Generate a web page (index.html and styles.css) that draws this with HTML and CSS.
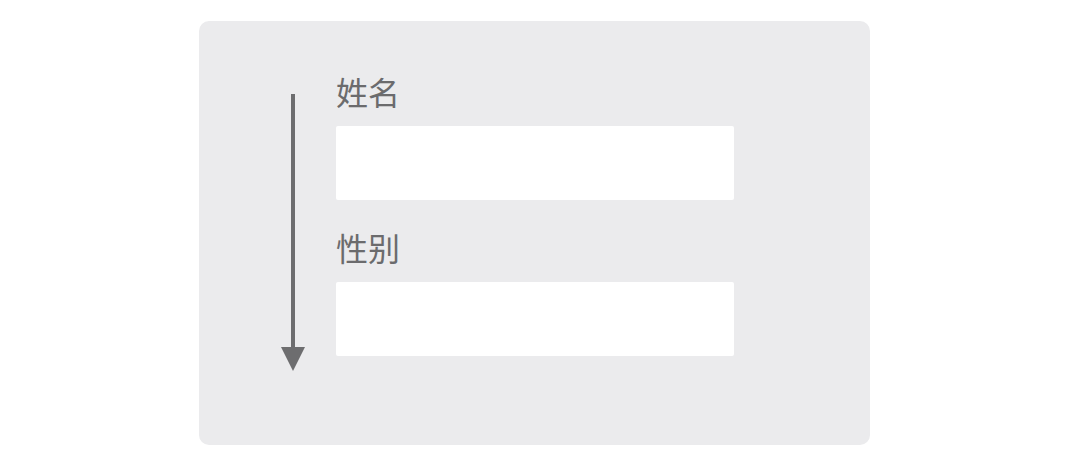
FILE: index.html
```html
<!DOCTYPE html>
<html lang="zh">
<head>
<meta charset="utf-8">
<link rel="stylesheet" href="styles.css">
</head>
<body>
<div class="card">
  <svg class="arrow" width="24" height="277" viewBox="0 0 24 277">
    <rect x="10" y="0" width="4" height="256" fill="#6d6d6f"/>
    <polygon points="0,253 24,253 12,277" fill="#6d6d6f"/>
  </svg>
  <div class="form">
    <div class="label">姓名</div>
    <div class="input"></div>
    <div class="label second">性别</div>
    <div class="input"></div>
  </div>
</div>
</body>
</html>
```
FILE: styles.css
```css
html, body { margin: 0; padding: 0; background: #fff; }
body { font-family: "Noto Sans CJK SC", "Noto Sans", sans-serif; }
.card {
  box-sizing: border-box;
  width: 671px;
  height: 424px;
  margin: 21px 0 0 199px;
  background: #ebebed;
  border-radius: 10px;
  padding: 50px 0 0 82px;
  display: flex;
  gap: 31px;
  align-items: flex-start;
}
.arrow { display: block; margin-top: 23px; }
.form { display: flex; flex-direction: column; width: 398px; }
.label {
  font-size: 32px;
  line-height: 40px;
  height: 40px;
  color: #6b6b6d;
  margin-bottom: 15px;
}
.label.second { margin-top: 27px; }
.input {
  height: 74px;
  background: #fff;
  border-radius: 2px;
}
```
